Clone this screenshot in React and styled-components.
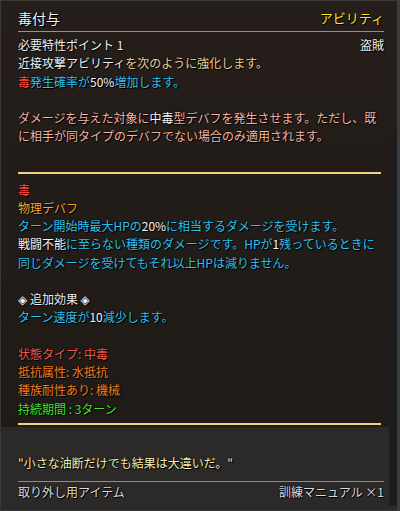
import React from 'react';
import styled, {createGlobalStyle} from 'styled-components';

const Global = createGlobalStyle`
  html, body {
    margin: 0;
    padding: 0;
    background: #1a1a1a;
  }
`;

const Frame = styled.div`
  position: relative;
  width: 400px;
  height: 511px;
  box-sizing: border-box;
  border: 1px solid #3a3938;
  border-right: 3px solid #3c3c3c;
  display: flex;
  flex-direction: column;
  font-family: 'Noto Sans CJK JP', 'DejaVu Sans', sans-serif;
  font-size: 12px;
  line-height: 18.25px;
  color: #f0f0f0;
  text-shadow: 1px 1px 0 #000, 0 0 2px #000;
  overflow: hidden;
`;

const Body = styled.div`
  background: linear-gradient(#251e1a, #201b18);
  padding: 6px 13px 0 17px;
`;

const Header = styled.div`
  display: flex;
  justify-content: space-between;
  align-items: center;
  padding-bottom: 2px;
  border-bottom: 1px solid #d9841e;
`;

const Title = styled.div`
  font-size: 14px;
  line-height: 22px;
  color: #f4f4f4;
`;

const Kind = styled.div`
  font-size: 13px;
  line-height: 22px;
  color: #f8e81c;
`;

const Lines = styled.div`
  margin-top: 4px;
`;

const Row = styled.div`
  display: flex;
  justify-content: space-between;
`;

const Line = styled.div`
  min-height: 18.25px;
  color: ${p => p.$c || '#f0f0f0'};
`;

const C = styled.span`
  color: ${p => p.$c};
`;

const Divider = styled.div`
  height: 2px;
  background: #f0d37c;
  margin: ${p => p.$m};
  margin-right: 3px;
`;

const Footer = styled.div`
  flex: 1;
  background: #2b2a29;
  padding: 27px 13px 0 17px;
`;

const Quote = styled.div`
  color: #f2efb4;
`;

const FootRow = styled.div`
  margin-top: 9px;
  padding-top: 1px;
  border-top: 1px solid #e8780e;
  display: flex;
  justify-content: space-between;
  color: #d9d9d9;
`;

const Track = styled.div`
  position: absolute;
  right: 0;
  top: 135px;
  bottom: 4px;
  width: 8px;
  background: #1d1d1d;
  border-radius: 6px 0 0 0;
`;

const W = '#f4f4f4';
const TAN = '#e7cf8f';
const PINK = '#f3b3a6';
const RED = '#ff4a3c';
const CYAN = '#2cc0f0';

export default function App() {
  return (
    <>
      <Global />
      <Frame>
        <Body>
          <Header>
            <Title>毒付与</Title>
            <Kind>アビリティ</Kind>
          </Header>
          <Lines>
            <Row>
              <Line>必要特性ポイント 1</Line>
              <Line>盗賊</Line>
            </Row>
            <Line>
              近接攻撃アビリティ<C $c={TAN}>を次のように強化します。</C>
            </Line>
            <Line>
              <C $c={RED}>毒</C>
              <C $c={CYAN}>発生確率が</C>
              <C $c={W}>50%</C>
              <C $c={CYAN}>増加します。</C>
            </Line>
            <Line />
            <Line $c={PINK}>
              ダメージを与えた対象に<C $c={W}>中毒</C>型デバフを発生させます。ただし、既
            </Line>
            <Line $c={PINK}>に相手が同タイプのデバフでない場合のみ適用されます。</Line>
          </Lines>
          <Divider $m="26px 0 7px 0" />
          <Line $c={RED}>毒</Line>
          <Line $c="#f5a623">物理デバフ</Line>
          <Line $c={CYAN}>
            ターン開始時最大HPの<C $c={W}>20%</C>に相当するダメージを受けます。
          </Line>
          <Line $c={CYAN}>
            <C $c={W}>戦闘不能</C>に至らない種類のダメージです。HPが<C $c={W}>1</C>残っているときに
          </Line>
          <Line $c={CYAN}>同じダメージを受けてもそれ以上HPは減りません。</Line>
          <Line />
          <Line>◈ 追加効果 ◈</Line>
          <Line $c={CYAN}>
            ターン速度が<C $c={W}>10</C>減少します。
          </Line>
          <Line />
          <Line $c="#f0584a">状態タイプ: 中毒</Line>
          <Line $c="#f27c1c">抵抗属性: 水抵抗</Line>
          <Line $c="#f27c1c">種族耐性あり: 機械</Line>
          <Line $c="#40e22a">持続期間 : 3ターン</Line>
          <Divider $m="5px 0 2px 0" />
        </Body>
        <Footer>
          <Quote>"小さな油断だけでも結果は大違いだ。"</Quote>
          <FootRow>
            <span>取り外し用アイテム</span>
            <span>訓練マニュアル ×1</span>
          </FootRow>
        </Footer>
        <Track />
      </Frame>
    </>
  );
}
